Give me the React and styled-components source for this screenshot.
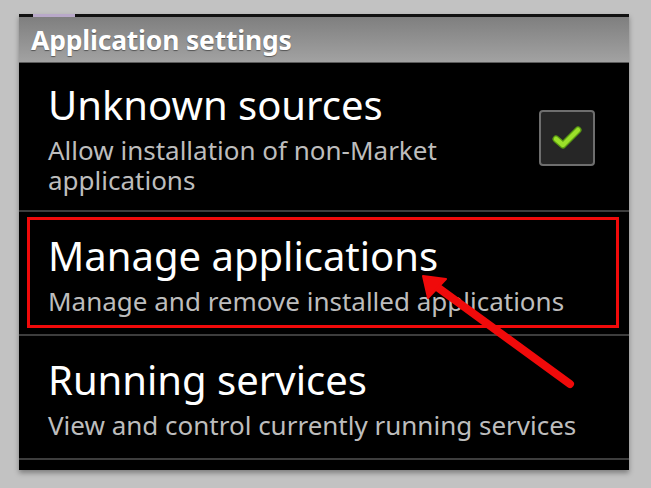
import React from 'react'
import styled, { createGlobalStyle } from 'styled-components'

const GlobalStyle = createGlobalStyle`
  html, body {
    margin: 0;
    padding: 0;
    background: #c2c2c2;
  }
`

const Page = styled.div`
  width: 651px;
  height: 488px;
  padding: 14px 22px 0 19px;
  box-sizing: border-box;
  font-family: "Noto Sans", "Open Sans", sans-serif;
`

const Screen = styled.div`
  position: relative;
  display: flex;
  flex-direction: column;
  height: 456px;
  background: #000;
  box-shadow: 0 3px 5px rgba(0, 0, 0, 0.35);
`

const StatusStrip = styled.div`
  height: 3px;
  background: #111;
  padding-left: 14px;

  span {
    display: block;
    width: 42px;
    height: 3px;
    background: #b9a9c9;
  }
`

const TitleBar = styled.div`
  height: 45px;
  display: flex;
  align-items: center;
  padding-left: 12px;
  background: linear-gradient(#7f7f7f, #a2a2a2);
  border-bottom: 1px solid #5c5c5c;
  color: #fff;
  font-size: 26.5px;
  font-weight: 700;
  letter-spacing: -0.2px;
  text-shadow: 0 1px 1px rgba(0, 0, 0, 0.45);
`

const List = styled.div`
  display: flex;
  flex-direction: column;
`

const Item = styled.div`
  position: relative;
  display: flex;
  align-items: center;
  box-sizing: border-box;
  height: ${p => p.$height}px;
  padding: 2px 34px 0 29px;
  border-bottom: 2px solid #3d3d3d;

  ${p => p.$highlight && `
    &::after {
      content: '';
      position: absolute;
      left: 8px;
      right: 10px;
      top: 5px;
      bottom: 6px;
      border: 3px solid #f00a0a;
    }
  `}
`

const Texts = styled.div`
  flex: 1;
  display: flex;
  flex-direction: column;
  gap: 6px;
`

const Title = styled.div`
  color: #fff;
  font-size: 40px;
  line-height: 48px;
`

const Summary = styled.div`
  color: #bdbdbd;
  font-size: 26px;
  line-height: 30px;
  max-width: ${p => p.$wrap ? '440px' : 'none'};
`

const CheckBox = styled.div`
  width: 52px;
  height: 52px;
  border: 2px solid #6e6e6e;
  border-radius: 4px;
  background: #262626;
  display: flex;
  align-items: center;
  justify-content: center;
`

const Arrow = styled.svg`
  position: absolute;
  left: 0;
  top: 0;
  pointer-events: none;
`

const items = [
  {
    title: 'Unknown sources',
    summary: 'Allow installation of non-Market applications',
    height: 149,
    wrap: true,
    checked: true,
  },
  {
    title: 'Manage applications',
    summary: 'Manage and remove installed applications',
    height: 124,
    highlight: true,
  },
  {
    title: 'Running services',
    summary: 'View and control currently running services',
    height: 124,
  },
]

export default function App() {
  return (
    <Page>
      <GlobalStyle />
      <Screen>
        <StatusStrip><span /></StatusStrip>
        <TitleBar>Application settings</TitleBar>
        <List>
          {items.map(item => (
            <Item key={item.title} $height={item.height} $highlight={item.highlight}>
              <Texts>
                <Title>{item.title}</Title>
                <Summary $wrap={item.wrap}>{item.summary}</Summary>
              </Texts>
              {item.checked && (
                <CheckBox>
                  <svg width="30" height="26" viewBox="0 0 30 26">
                    <path d="M4 14 L11 20 L26 5" fill="none" stroke="#5a9a12" strokeWidth="7" strokeLinecap="round" strokeLinejoin="round" />
                    <path d="M4 14 L11 20 L26 5" fill="none" stroke="#9be02a" strokeWidth="4.5" strokeLinecap="round" strokeLinejoin="round" />
                  </svg>
                </CheckBox>
              )}
            </Item>
          ))}
        </List>
        <Arrow width="610" height="456" viewBox="0 0 610 456">
          <line x1="551" y1="370" x2="414" y2="270" stroke="#f00a0a" strokeWidth="8" strokeLinecap="round" />
          <polygon points="404,262 427,265 409,284" fill="#f00a0a" stroke="#f00a0a" strokeWidth="2" strokeLinejoin="round" />
        </Arrow>
      </Screen>
    </Page>
  )
}
